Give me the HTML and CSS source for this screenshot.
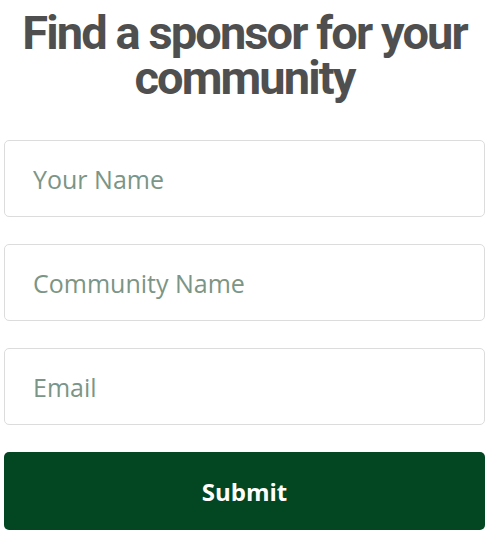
FILE: index.html
```html
<!DOCTYPE html>
<html lang="en">
<head>
    <meta charset="UTF-8">
    <title>Find a sponsor</title>
    <link rel="stylesheet" href="styles.css">
</head>
<body>
<div class="sponsor">
    <h1 class="sponsor-title">Find a sponsor for your community</h1>
    <form class="sponsor-form">
        <input class="field" type="text" placeholder="Your Name">
        <input class="field" type="text" placeholder="Community Name">
        <input class="field" type="email" placeholder="Email">
        <button class="submit" type="button">Submit</button>
    </form>
</div>
</body>
</html>
```

FILE: styles.css
```css
body {
    margin: 0;
    background: #fff;
    font-family: "Open Sans", Arial, sans-serif;
}
.sponsor {
    width: 481px;
    margin-left: 4px;
}
.sponsor-title {
    margin: 10px 0 40px;
    font-family: Roboto, Arial, sans-serif;
    font-weight: 700;
    font-size: 47px;
    line-height: 45px;
    letter-spacing: -1.9px;
    color: #4f4f4f;
    text-align: center;
}
.sponsor-form {
    display: flex;
    flex-direction: column;
    gap: 27px;
}
.field {
    box-sizing: border-box;
    height: 77px;
    padding: 0 28px;
    border: 1px solid #dcdcdc;
    border-radius: 5px;
    font-family: "Open Sans", Arial, sans-serif;
    font-size: 25px;
    color: #333;
    outline: none;
}
.field::placeholder {
    color: #7b9586;
}
.submit {
    height: 78px;
    border: 0;
    border-radius: 5px;
    background: #034622;
    color: #fff;
    font-family: "Open Sans", Arial, sans-serif;
    font-weight: 700;
    font-size: 24px;
}
```
